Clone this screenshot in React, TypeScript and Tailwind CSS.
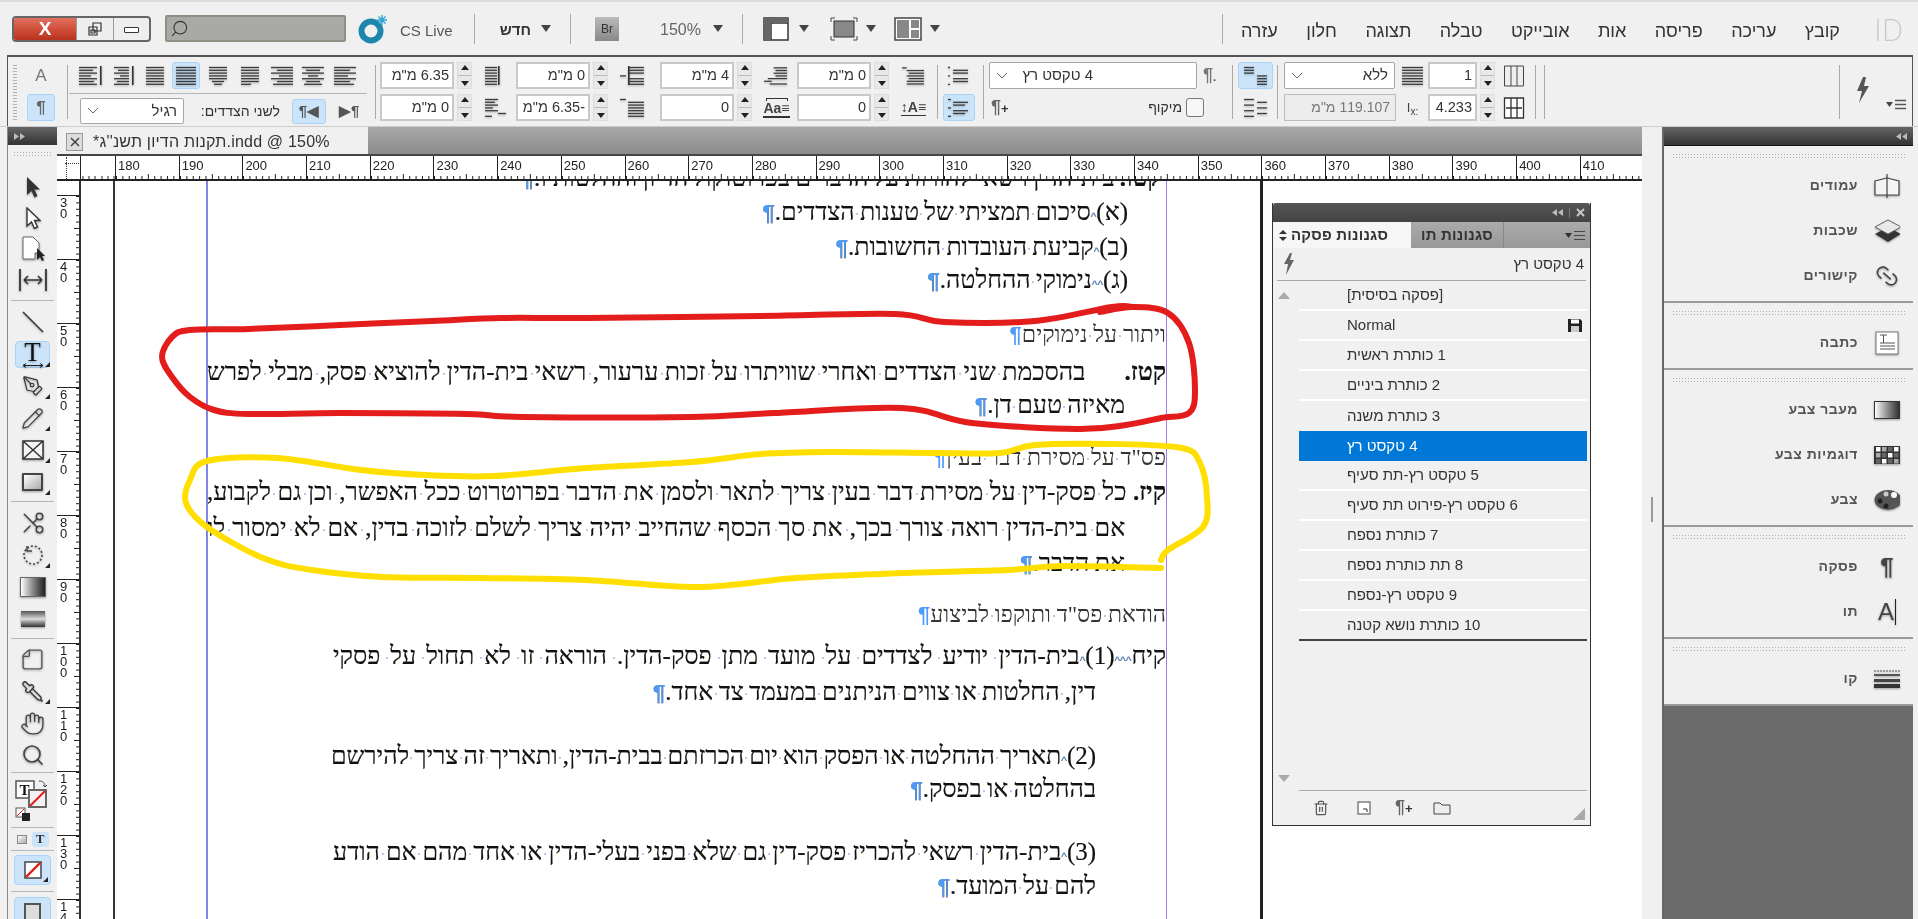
import React from "react";
import { Hand, Pencil, PenTool, Pipette, Scissors, Search, StickyNote, Trash2, Link2 } from "lucide-react";

const Tri = ({ c = "" }: { c?: string }) => (
  <svg width="10" height="7" viewBox="0 0 10 7" className={c}><path d="M0 0H10L5 7Z" fill="#444" /></svg>
);
const Sep = ({ c = "" }: { c?: string }) => <div className={"w-px bg-[#a8a8a8] " + c} />;
const Grip = ({ c = "" }: { c?: string }) => (
  <div className={"h-[5px] bg-[radial-gradient(circle,#b0b0b0_0.7px,transparent_0.8px)] bg-[length:3px_3px] " + c} />
);

const Lines = ({ rows, w = 24, h = 22, bar, c = "" }: { rows: number[][]; w?: number; h?: number; bar?: number; c?: string }) => (
  <svg width={w} height={h} viewBox={`0 0 ${w} ${h}`} className={"drop-shadow-[0_1px_1px_rgba(0,0,0,0.3)] " + c}>
    {rows.map((r, i) => (
      <line key={i} x1={r[0]} x2={r[1]} y1={2.5 + i * 2.8} y2={2.5 + i * 2.8} stroke="#3c3c3c" strokeWidth="1.3" />
    ))}
    {bar !== undefined && <rect x={bar} y="1" width="1.6" height="19" fill="#333" />}
  </svg>
);

const alignRows: { rows: number[][]; bar?: number; on?: boolean; w: number }[] = [
  { w: 24, bar: 21, rows: [[0, 18], [0, 14], [0, 18], [0, 12], [0, 18], [0, 15], [0, 18]] },
  { w: 24, bar: 21, rows: [[3, 18], [7, 18], [3, 18], [9, 18], [3, 18], [6, 18], [3, 18]] },
  { w: 22, rows: [[2, 20], [2, 20], [2, 20], [2, 20], [2, 20], [2, 20], [2, 20]] },
  { w: 22, on: true, rows: [[1, 21], [1, 21], [1, 21], [1, 21], [1, 21], [1, 21], [1, 21]] },
  { w: 22, rows: [[2, 20], [2, 20], [2, 20], [2, 20], [2, 20], [5, 17], [7, 15]] },
  { w: 22, rows: [[2, 20], [2, 20], [2, 20], [2, 20], [2, 20], [2, 20], [2, 12]] },
  { w: 22, rows: [[0, 22], [6, 22], [0, 22], [8, 22], [0, 22], [6, 22], [2, 22]] },
  { w: 22, rows: [[0, 22], [4, 18], [0, 22], [6, 16], [0, 22], [4, 18], [2, 20]] },
  { w: 22, rows: [[0, 22], [0, 16], [0, 22], [0, 14], [0, 22], [0, 16], [0, 20]] },
];

const Stepper = () => (
  <div className="ml-[3px] flex h-[27px] w-[15px] flex-col items-center justify-around border border-[#ddd] bg-[#e8e8e8]">
    <svg width="8" height="5"><path d="M0 5L4 0L8 5Z" fill="#222" /></svg>
    <div className="h-px w-full bg-[#bbb]" />
    <svg width="8" height="5"><path d="M0 0L8 0L4 5Z" fill="#222" /></svg>
  </div>
);
const Field = ({ v, w = 74, ltr }: { v: string; w?: number; ltr?: boolean }) => (
  <div className="flex h-[27px]">
    <div
      dir={ltr ? "ltr" : "rtl"}
      style={{ width: w }}
      className={"h-[27px] whitespace-nowrap border-2 border-[#c8c8c8] bg-white px-[3px] text-[14.5px] leading-[23px] text-[#333] " + (ltr ? "text-right" : "")}
    >
      {v}
    </div>
    <Stepper />
  </div>
);
const Col = ({ c, children }: { c: string; children: React.ReactNode }) => (
  <div className={"flex shrink-0 flex-col gap-[5px] " + c}>{children}</div>
);
const Cell = ({ children, on, c = "" }: { children?: React.ReactNode; on?: boolean; c?: string }) => (
  <div className={"flex h-[27px] items-center justify-center rounded-[3px] " + (on ? "border border-[#a9d3f7] bg-[#cbe4fa] " : "") + c}>
    {children}
  </div>
);
const Chevron = () => (
  <svg width="12" height="8" className="shrink-0"><path d="M1 1L6 6L11 1" fill="none" stroke="#666" /></svg>
);
const Select = ({ v, c }: { v: string; c: string }) => (
  <div className={"flex h-[27px] items-center rounded-[2px] border border-[#a6a6a6] bg-white px-[6px] " + c}>
    <Chevron />
    <div dir="rtl" className="flex-1 whitespace-nowrap text-[15px] text-[#333]">{v}</div>
  </div>
);
const PilcrowPlus = () => (
  <span className="text-[18px] font-bold leading-none text-[#666]">¶<span className="text-[13px] text-[#333]">+</span></span>
);

const ControlPanel = () => (
  <div className="ml-[7px] mr-[5px] flex h-[71px] shrink-0 border-x border-t-2 border-[#555] bg-[#f0f0f0] pt-[5px]">
    <div className="ml-[5px] mt-[2px] h-[58px] w-[4px] shrink-0 bg-[radial-gradient(circle,#b0b0b0_0.7px,transparent_0.8px)] bg-[length:2px_3px]" />
    <Col c="ml-[10px] w-[28px]">
      <Cell><span className="text-[17px] text-[#777]">A</span></Cell>
      <Cell on><span className="text-[17px] font-bold text-[#666]">¶</span></Cell>
    </Col>
    <Sep c="ml-[12px] h-[54px] mt-[3px] shrink-0" />
    <div className="ml-px flex w-[298px] shrink-0 flex-col">
      <div className="flex h-[31px] items-start justify-between px-[8px] pb-[3px]">
        {alignRows.map((a, i) => (
          <div key={i} className={"flex h-[27px] w-[28px] items-center justify-center rounded-[3px] " + (a.on ? "border border-[#a9d3f7] bg-[#cbe4fa]" : "")}>
            <Lines rows={a.rows} bar={a.bar} w={a.w} />
          </div>
        ))}
      </div>
      <div className="flex h-[32px] items-center border-t border-[#b5b5b5] pl-[11px] pt-[3px]">
        <Select v="רגיל" c="w-[104px] !h-[26px]" />
        <span dir="rtl" className="ml-[8px] w-[88px] whitespace-nowrap text-[14px] text-[#333]">לשני הצדדים:</span>
        <div className="ml-[12px] flex h-[25px] w-[34px] items-center justify-center rounded-[3px] border border-[#a9d3f7] bg-[#cbe4fa] text-[15px] font-bold text-[#555]">¶◀</div>
        <div className="ml-[13px] text-[15px] font-bold text-[#555]">▶¶</div>
      </div>
    </div>
    <Sep c="ml-[8px] h-[54px] mt-[3px] shrink-0" />
    <Col c="ml-[4px] w-[92px]">
      <Field v="6.35 מ&quot;מ" />
      <Field v="0 מ&quot;מ" />
    </Col>
    <Col c="ml-[12px] w-[26px]">
      <Cell><Lines w={26} rows={[[1, 13], [1, 13], [1, 13], [1, 13], [1, 13], [1, 13], [1, 13]]} bar={14} /></Cell>
      <Cell><Lines w={26} rows={[[1, 14], [1, 11], [1, 14], [1, 9], [1, 14], [14, 22], [1, 8]]} /></Cell>
    </Col>
    <Col c="ml-[6px] w-[93px]">
      <Field v="0 מ&quot;מ" />
      <Field v="-6.35 מ&quot;מ" />
    </Col>
    <Col c="ml-[11px] w-[26px]">
      <Cell><Lines w={26} rows={[[9, 24], [9, 24], [9, 24], [0, 6], [9, 24], [9, 24], [9, 24]]} bar={8} /></Cell>
      <Cell><Lines w={26} rows={[[0, 6], [8, 24], [8, 24], [8, 24], [8, 24], [8, 24], [8, 24]]} /></Cell>
    </Col>
    <Col c="ml-[14px] w-[92px]">
      <Field v="4 מ&quot;מ" />
      <Field v="0" />
    </Col>
    <Col c="ml-[12px] w-[25px]">
      <Cell><Lines w={26} rows={[[10, 24], [12, 24], [10, 24], [12, 24], [4, 24], [0, 8], [6, 24]]} /></Cell>
      <Cell>
        <div className="flex flex-col items-center leading-none">
          <div className="h-[3px] w-[22px] border-x border-t border-[#333]" />
          <span className="border-b-2 border-[#333] text-[14px] font-bold leading-[15px] text-[#444]">Aa≡</span>
        </div>
      </Cell>
    </Col>
    <Col c="ml-[8px] w-[92px]">
      <Field v="0 מ&quot;מ" />
      <Field v="0" />
    </Col>
    <Col c="ml-[12px] w-[25px]">
      <Cell><Lines w={26} rows={[[1, 6], [6, 24], [8, 24], [6, 24], [8, 24], [6, 24], [6, 24]]} /></Cell>
      <Cell><span className="whitespace-nowrap border-b border-[#333] text-[14px] font-bold leading-[16px] text-[#444]">↕A≡</span></Cell>
    </Col>
    <Sep c="ml-[11px] h-[54px] mt-[3px] shrink-0" />
    <Col c="ml-[5px] w-[32px]">
      <Cell><Lines w={22} rows={[[0, 2], [5, 20], [5, 20], [0, 2], [5, 20], [5, 20], [0, 2]]} /></Cell>
      <Cell on><Lines w={22} rows={[[0, 3], [5, 20], [5, 17], [0, 3], [5, 20], [5, 17], [0, 3]]} /></Cell>
    </Col>
    <Sep c="ml-[8px] h-[54px] mt-[3px] shrink-0" />
    <Col c="ml-[5px] w-[235px]">
      <div className="flex h-[27px] items-center">
        <Select v="4 טקסט רץ" c="w-[208px] !pr-[103px]" />
        <span className="ml-[6px] text-[18px] font-bold text-[#777]">¶<span className="text-[11px] text-[#333]">.</span></span>
      </div>
      <div className="flex h-[27px] items-center">
        <span className="ml-[2px] mt-[1px]"><PilcrowPlus /></span>
        <span dir="rtl" className="ml-auto whitespace-nowrap text-[14px] text-[#333]">מיקוף</span>
        <div className="ml-[4px] mr-[20px] h-[19px] w-[18px] rounded-[3px] border border-[#777] bg-[#f6f6f6]" />
      </div>
    </Col>
    <Sep c="ml-[8px] h-[54px] mt-[3px] shrink-0" />
    <Col c="ml-[5px] w-[35px]">
      <Cell on><Lines w={26} rows={[[1, 11], [1, 11], [1, 11], [14, 24], [14, 24], [14, 24], [14, 24]]} /></Cell>
      <Cell><Lines w={26} rows={[[1, 11], [14, 24], [1, 11], [14, 24], [1, 11], [14, 24], [1, 11]]} /></Cell>
    </Col>
    <Sep c="ml-[4px] h-[54px] mt-[3px] shrink-0" />
    <Col c="ml-[6px] w-[112px]">
      <Select v="ללא" c="w-[111px]" />
      <div dir="rtl" className="h-[27px] w-[112px] border border-[#bbb] bg-[#ececec] px-[5px] text-[14px] leading-[25px] text-[#777]">119.107 מ&quot;מ</div>
    </Col>
    <Col c="ml-[4px] w-[25px]">
      <Cell><Lines w={24} rows={[[1, 22], [1, 22], [1, 22], [1, 22], [1, 22], [1, 22], [1, 22]]} /></Cell>
      <Cell><span className="whitespace-nowrap text-[13px] leading-none text-[#444]">I<sub className="text-[10px]">x:</sub></span></Cell>
    </Col>
    <Col c="ml-[3px] w-[67px]">
      <Field v="1" w={49} ltr />
      <Field v="4.233" w={49} ltr />
    </Col>
    <Col c="ml-[7px] w-[23px]">
      <Cell>
        <svg width="22" height="24"><path d="M1.5 2H20.5V22H1.5ZM8 2V22M14 2V22" fill="#eee" stroke="#444" /></svg>
      </Cell>
      <Cell>
        <svg width="22" height="26"><path d="M1.5 3H20.5V23H1.5ZM8 3V23M14 3V23M3 13H19" fill="#fff" stroke="#333" strokeWidth="1.3" /></svg>
      </Cell>
    </Col>
    <Sep c="ml-[10px] h-[54px] mt-[3px] shrink-0" />
    <Sep c="ml-[8px] h-[54px] mt-[3px] shrink-0" />
    <Sep c="ml-[294px] h-[54px] mt-[3px] shrink-0" />
    <svg width="14" height="26" className="ml-[16px] mt-[15px] shrink-0"><path d="M7 0L1 14H6L3 26L13 9H8L10 0Z" fill="#555" /></svg>
    <div className="ml-[16px] mt-[20px] flex shrink-0 items-center gap-[2px]">
      <svg width="7" height="5"><path d="M0 0H7L3.5 5Z" fill="#444" /></svg>
      <svg width="11" height="11"><path d="M0 1.5H11M0 5.5H11M0 9.5H11" stroke="#555" strokeWidth="1.3" /></svg>
    </div>
  </div>
);

const TitleBar = () => (
  <div className="flex h-[53px] shrink-0 items-center">
    <div className="ml-[12px] flex h-[26px] w-[139px] shrink-0 overflow-hidden rounded-[4px] border-2 border-[#666] bg-[#eee]">
      <div className="flex w-[62px] items-center justify-center bg-linear-to-b from-[#e07060] via-[#d0503a] to-[#b8321e] text-[19px] font-black leading-none text-white">X</div>
      <div className="flex w-[38px] items-center justify-center border-x border-[#999]">
        <svg width="14" height="14"><path d="M5 1H13V9H5ZM1 5H9V13H1ZM3 8H7V11H3Z" fill="none" stroke="#333" strokeWidth="1.2" /></svg>
      </div>
      <div className="flex flex-1 items-center justify-center">
        <div className="mt-[2px] h-[6px] w-[15px] rounded-[1px] border border-[#333] bg-white" />
      </div>
    </div>
    <div className="ml-[14px] flex h-[27px] w-[181px] shrink-0 items-center rounded-[2px] border-2 border-[#8f8f83] bg-[#a9a9a6] pl-[3px]">
      <Search size={19} className="-scale-x-100 text-[#333]" strokeWidth={1.4} />
    </div>
    <svg width="32" height="30" viewBox="0 0 32 30" className="ml-[12px] shrink-0">
      <circle cx="13" cy="17" r="9.5" fill="none" stroke="#1d86ad" strokeWidth="6" />
      <path d="M24 1V11M19 6H29M20.5 2.5L27.5 9.5M27.5 2.5L20.5 9.5" stroke="#2aa6d6" strokeWidth="1.4" />
    </svg>
    <span className="ml-[10px] mt-[5px] w-[52px] shrink-0 whitespace-nowrap text-[15px] text-[#555]">CS Live</span>
    <Sep c="ml-[22px] h-[30px] shrink-0" />
    <span dir="rtl" className="ml-[19px] mt-[4px] w-[37px] shrink-0 text-[15px] font-bold text-[#333]">חדש</span>
    <Tri c="ml-[10px] shrink-0" />
    <Sep c="ml-[19px] h-[30px] shrink-0" />
    <div className="ml-[24px] flex h-[24px] w-[24px] shrink-0 items-center justify-center bg-linear-to-b from-[#bbb] to-[#888] text-[12px] text-[#333]">Br</div>
    <span className="ml-[41px] mt-[3px] w-[40px] shrink-0 text-[16px] text-[#666]">150%</span>
    <Tri c="ml-[13px] shrink-0" />
    <Sep c="ml-[19px] h-[30px] shrink-0" />
    <svg width="26" height="24" className="ml-[20px] shrink-0"><path d="M1 1H25V23H1ZM8 6V23M1 6H25" fill="#fff" stroke="#333" strokeWidth="1.5" /><path d="M1 1H25V6H1ZM1 6H8V23H1Z" fill="#666" /></svg>
    <Tri c="ml-[10px] shrink-0" />
    <svg width="28" height="24" className="ml-[21px] shrink-0"><path d="M1 5V1H5M23 1H27V5M27 19V23H23M5 23H1V19" fill="none" stroke="#444" /><rect x="4" y="4" width="20" height="16" fill="#888" stroke="#333" /></svg>
    <Tri c="ml-[8px] shrink-0" />
    <svg width="28" height="24" className="ml-[18px] shrink-0"><rect x="1" y="1" width="26" height="22" fill="#fff" stroke="#444" strokeWidth="1.5" /><path d="M3 3H15V21H3ZM17 3H25V11H17ZM17 13H25V21H17Z" fill="#888" /></svg>
    <Tri c="ml-[8px] shrink-0" />
    <Sep c="ml-[282px] h-[30px] shrink-0" />
    <div dir="rtl" className="ml-[18px] mt-[6px] flex w-[599px] shrink-0 justify-between text-[18px] text-[#333]">
      {["קובץ", "עריכה", "פריסה", "אות", "אובייקט", "טבלה", "תצוגה", "חלון", "עזרה"].map((m) => (
        <span key={m}>{m}</span>
      ))}
    </div>
    <span className="ml-[34px] mt-[2px] font-['Inter',sans-serif] text-[30px] font-extralight leading-none text-[#c8c8c8]">ID</span>
  </div>
);

const Tool = ({ h = 32, children, on, tri }: { h?: 31 | 32; children: React.ReactNode; on?: boolean; tri?: boolean }) => (
  <div className={(h === 31 ? "h-[31px]" : "h-[32px]") + " relative flex items-center justify-center"}>
    {on && <div className="absolute left-[7px] top-[3px] h-[27px] w-[35px] rounded-[4px] border border-[#a9d3f7] bg-[#cbe4fa]" />}
    <div className="relative flex items-center justify-center drop-shadow-[0_1px_1px_rgba(0,0,0,0.35)]">{children}</div>
    {tri && <svg width="5" height="5" className="absolute bottom-[3px] right-[7px]"><path d="M5 0V5H0Z" fill="#222" /></svg>}
  </div>
);
const ToolSep = ({ c }: { c: string }) => <div className={"mx-[3px] h-px shrink-0 bg-[#b5b5b5] " + c} />;

const Toolbox = () => (
  <div className="ml-[7px] flex w-[50px] shrink-0 flex-col border-l border-[#888] bg-[#f0f0f0]">
    <div className="flex h-[18px] shrink-0 items-center bg-linear-to-b from-[#666] to-[#333] pl-[6px]">
      <svg width="11" height="7"><path d="M0 0L5 3.5L0 7ZM6 0L11 3.5L6 7Z" fill="#bbb" /></svg>
    </div>
    <Grip c="mx-[5px] mt-[6px] shrink-0" />
    <div className="mt-[15px] flex flex-col">
      <Tool h={31}><svg width="16" height="22"><path d="M2 1V19L6.5 15L9.5 21.5L12.5 20L9.5 13.5L15 13.5Z" fill="#333" /></svg></Tool>
      <Tool h={31}><svg width="16" height="22"><path d="M2 1V19L6.5 15L9.5 21.5L12.5 20L9.5 13.5L15 13.5Z" fill="#fff" stroke="#333" strokeWidth="1.4" /></svg></Tool>
      <Tool h={31}><svg width="24" height="26"><path d="M2 1H12L18 7V17H14V23H2Z" fill="#fff" stroke="#666" /><path d="M16 12V24L19 21L21 25L23 24L21 20H24Z" fill="#222" /></svg></Tool>
      <Tool h={31}><svg width="30" height="24"><path d="M2 1V23M28 1V23" stroke="#333" strokeWidth="1.8" /><path d="M6 12H24M6 12L10 8M6 12L10 16M24 12L20 8M24 12L20 16" fill="none" stroke="#333" strokeWidth="1.6" /></svg></Tool>
      <ToolSep c="mb-[5px] mt-[5px]" />
      <Tool><svg width="22" height="22"><path d="M1 1L21 21" stroke="#333" strokeWidth="1.4" /></svg></Tool>
      <Tool on tri>
        <div className="flex flex-col items-center">
          <span className="font-['Liberation_Serif',serif] text-[27px] leading-[22px] text-[#111]">T</span>
          <svg width="22" height="5"><path d="M1 2.5H21M1 2.5L4 0.5M1 2.5L4 4.5M21 2.5L18 0.5M21 2.5L18 4.5" fill="none" stroke="#222" /></svg>
        </div>
      </Tool>
      <Tool tri><PenTool size={22} strokeWidth={1.3} className="text-[#333]" /></Tool>
      <Tool tri><Pencil size={23} strokeWidth={1.3} className="text-[#444]" /></Tool>
      <Tool tri><svg width="22" height="20"><path d="M1 1H21V19H1ZM1 1L21 19M21 1L1 19" fill="#f4f4f4" stroke="#333" strokeWidth="1.5" /></svg></Tool>
      <Tool tri><div className="h-[18px] w-[21px] rounded-[1px] border-2 border-[#444] bg-linear-to-br from-[#fff] to-[#aaa]" /></Tool>
      <ToolSep c="mb-[5px] mt-[3px]" />
      <Tool><Scissors size={26} strokeWidth={1.4} className="-scale-x-100 text-[#444]" /></Tool>
      <Tool tri><svg width="22" height="22"><circle cx="11" cy="11" r="9" fill="none" stroke="#444" strokeWidth="1.6" strokeDasharray="2 2" /><path d="M5 2V7H10" fill="none" stroke="#444" strokeWidth="1.4" /></svg></Tool>
      <Tool><div className="h-[18px] w-[24px] bg-linear-to-r from-[#fff] to-[#222] outline outline-[#666]" /></Tool>
      <Tool><div className="h-[16px] w-[24px] bg-linear-to-b from-[#555] via-[#ddd] to-[#333]" /></Tool>
      <ToolSep c="mb-[4px] mt-[3px]" />
      <Tool><StickyNote size={25} strokeWidth={1.3} className="-scale-x-100 text-[#555]" /></Tool>
      <Tool tri><Pipette size={23} strokeWidth={1.4} className="-scale-x-100 text-[#333]" /></Tool>
      <Tool><Hand size={25} strokeWidth={1.3} className="text-[#444]" /></Tool>
      <Tool><Search size={24} strokeWidth={1.7} className="text-[#444]" /></Tool>
      <ToolSep c="mb-[5px] mt-[1px]" />
      <div className="flex h-[46px] shrink-0 items-center justify-center">
        <svg width="36" height="44" viewBox="0 0 36 44">
          <rect x="1" y="2" width="18" height="17" fill="#fff" stroke="#555" strokeWidth="1.5" />
          <text x="4.5" y="16" fontSize="15" fontWeight="bold" fontFamily="Liberation Serif" fill="#111">T</text>
          <path d="M24 2C28 2 30 4 30 8M30 8L28 6M30 8L32 6" fill="none" stroke="#444" />
          <rect x="14" y="11" width="17" height="17" fill="#f2f2f2" stroke="#666" strokeWidth="2" />
          <path d="M15 27L30 12" stroke="#e01818" strokeWidth="2" />
          <rect x="1" y="29" width="9" height="9" fill="#fff" stroke="#555" />
          <path d="M2 37L9 30" stroke="#e01818" />
          <rect x="7" y="34" width="8" height="8" fill="#222" />
        </svg>
      </div>
      <ToolSep c="mb-[3px] mt-[3px]" />
      <div className="flex h-[16px] shrink-0 items-center justify-center gap-[5px]">
        <div className="h-[9px] w-[10px] border border-[#888] bg-linear-to-br from-[#fff] to-[#aaa]" />
        <div className="flex h-[15px] w-[17px] items-center justify-center rounded-[3px] bg-[#cbe4fa] font-['Liberation_Serif',serif] text-[13px] font-bold text-[#333]">T</div>
      </div>
      <ToolSep c="mb-[4px] mt-[3px]" />
      <div className="relative mx-[6px] flex h-[30px] shrink-0 items-center justify-center rounded-[4px] border border-[#a9d3f7] bg-[#cbe4fa]">
        <svg width="18" height="18"><rect x="1" y="1" width="16" height="16" fill="#fff" stroke="#444" strokeWidth="1.5" /><path d="M2 16L16 2" stroke="#e01818" strokeWidth="2.4" /></svg>
        <svg width="5" height="5" className="absolute bottom-[2px] right-[2px]"><path d="M5 0V5H0Z" fill="#222" /></svg>
      </div>
      <ToolSep c="mb-[5px] mt-[6px]" />
      <div className="mx-[6px] flex h-[28px] shrink-0 items-start justify-center rounded-[4px] border border-[#a9d3f7] bg-[#cbe4fa] pt-[5px]">
        <div className="h-[20px] w-[17px] border-2 border-[#555] bg-[#ddd]" />
      </div>
    </div>
  </div>
);

const Ticks = ({ w }: { w: number }) => (
  <svg width={w} height="6" className="absolute bottom-0 left-0">
    {Array.from({ length: 10 }).map((_, i) => (
      <line key={i} x1={i * 6.37 + 0.5} x2={i * 6.37 + 0.5} y1={i === 5 ? 1 : 3} y2="6" stroke="#222" />
    ))}
  </svg>
);
const hNums = [180, 190, 200, 210, 220, 230, 240, 250, 260, 270, 280, 290, 300, 310, 320, 330, 340, 350, 360, 370, 380, 390, 400, 410];
const HRuler = () => (
  <div className="flex h-[25px] shrink-0 overflow-hidden border-b-2 border-[#222] bg-white">
    <div className="relative h-full w-[24px] shrink-0 border-r border-[#222]">
      <div className="absolute left-[8px] top-[7px] h-px w-[16px] border-t border-dotted border-[#333]" />
      <div className="absolute left-[9px] top-[1px] h-[22px] w-px border-l border-dotted border-[#333]" />
    </div>
    <div className="relative h-full w-[34px] shrink-0"><svg width="34" height="6" className="absolute bottom-0 right-0"><path d="M2 3V6M8 3V6M14 3V6M21 3V6M27 3V6M33 3V6" stroke="#222" /></svg></div>
    {hNums.map((n) => (
      <div key={n} className="relative h-full w-[63.7px] shrink-0 border-l border-[#222] pl-[2px] text-[13px] leading-[19px] text-[#222]">
        {n}
        <Ticks w={63.7} />
      </div>
    ))}
    <div className="relative h-full w-[59px] shrink-0 overflow-hidden border-l border-[#222]"><Ticks w={63.7} /></div>
  </div>
);
const vNums = ["30", "40", "50", "60", "70", "80", "90", "100", "110", "120", "130", "140"];
const VRuler = () => (
  <div className="flex w-[24px] shrink-0 flex-col border-r-2 border-[#333] bg-white">
    <div className="h-[14px] shrink-0" />
    {vNums.map((n) => (
      <div key={n} className="relative h-[64px] shrink-0 border-t border-[#222] pl-[3px] pt-[1px] text-[13px] leading-[11px] text-[#222]">
        {n.split("").map((d, i) => <div key={i}>{d}</div>)}
        <svg width="6" height="64" className="absolute right-0 top-0">
          {Array.from({ length: 10 }).map((_, i) => (
            <line key={i} x1={i === 5 ? 1 : 3} x2="6" y1={i * 6.4 + 0.5} y2={i * 6.4 + 0.5} stroke="#222" />
          ))}
        </svg>
      </div>
    ))}
  </div>
);

const T = ({ s }: { s: string }) => (
  <>
    {s.split(/([ ^¶])/).map((p, i) => {
      if (p === " ")
        return (
          <React.Fragment key={i}>
            <span className="relative inline-block h-0 w-0 align-baseline">
              <span className="absolute bottom-[5px] right-[2px] size-[2px] rounded-full bg-[#8fbdf5]" />
            </span>{" "}
          </React.Fragment>
        );
      if (p === "^") return <span key={i} className="align-[-1px] font-['Liberation_Sans',sans-serif] text-[12px] font-normal text-[#6aa5ea]">^</span>;
      if (p === "¶") return <span key={i} className="font-['Liberation_Sans',sans-serif] text-[22px] font-bold text-[#4c9bfb]">¶</span>;
      return <React.Fragment key={i}>{p}</React.Fragment>;
    })}
  </>
);

const lineBase = "h-[35px] leading-[35px] text-[#111] text-[25px] [word-spacing:-1px] [-webkit-text-stroke:0.2px_#111]";
const headBase = "h-[35px] leading-[35px] text-[#333] text-[23px]";
const just = " text-justify [text-align-last:justify]";
const Page = () => (
  <div className="relative w-[1148px] shrink-0 overflow-hidden border-r-[3px] border-[#222] bg-white">
    <div className="absolute bottom-0 left-[91px] top-0 w-px bg-[#5b8fe0]" />
    <div className="absolute bottom-0 left-[92px] top-0 w-px bg-[#a679e8]" />
    <div className="absolute bottom-0 left-[1051px] top-0 w-px bg-[#a679e8]" />
    <div dir="rtl" className="ml-[92px] w-[959px] font-['Liberation_Serif',serif]">
      <div className={lineBase + " -mb-[1px] -mt-[21px] pr-[5px]"}><b>קטו.</b> <T s="בית-הדין רשאי להורות על הדברים בפרוטוקול הדיון והחלטותיו.¶" /></div>
      <div className={lineBase + " pr-[38px]"}><T s="(א)^סיכום תמציתי של טענות הצדדים.¶" /></div>
      <div className={lineBase + " pr-[38px]"}><T s="(ב)^קביעת העובדות החשובות.¶" /></div>
      <div className={lineBase + " -mt-[2px] pr-[38px]"}><T s="(ג)^^נימוקי ההחלטה.¶" /></div>
      <div className={headBase + " mt-[20px]"}><T s="ויתור על נימוקים¶" /></div>
      <div className={lineBase + just + " mt-[2px]"}><b className="inline-block w-[81px] text-right [text-align-last:right]">קטז.</b><T s="בהסכמת שני הצדדים ואחרי שוויתרו על זכות ערעור, רשאי בית-הדין להוציא פסק, מבלי לפרש" /></div>
      <div className={lineBase + " -mt-[2px] pr-[41px]"}><T s="מאיזה טעם דן.¶" /></div>
      <div className={headBase + " mt-[18px]"}><T s='פס"ד על מסירת דבר בעין¶' /></div>
      <div className={lineBase + just + " -mt-[1px]"}><b>קיז.</b> <T s="כל פסק-דין על מסירת דבר בעין צריך לתאר ולסמן את הדבר בפרוטרוט ככל האפשר, וכן גם לקבוע," /></div>
      <div className={lineBase + just + " mt-[1px] pr-[41px]"}><T s="אם בית-הדין רואה צורך בכך, את סך הכסף שהחייב יהיה צריך לשלם לזוכה בדין, אם לא ימסור לו" /></div>
      <div className={lineBase + " pr-[41px]"}><T s="את הדבר.¶" /></div>
      <div className={headBase + " mt-[17px]"}><T s='הודאת פס"ד ותוקפו לביצוע¶' /></div>
      <div className={lineBase + just + " mt-[6px] pl-[126px]"}>קיח<T s="^^^(1)^בית-הדין יודיע לצדדים על מועד מתן פסק-הדין. הוראה זו לא תחול על פסקי" /></div>
      <div className={lineBase + " mt-[1px] pr-[70px]"}><T s="דין, החלטות או צווים הניתנים במעמד צד אחד.¶" /></div>
      <div className={lineBase + just + " mt-[29px] pl-[124px] pr-[70px] ![word-spacing:-3px]"}><T s="(2)^תאריך ההחלטה או הפסק הוא יום הכרזתם בבית-הדין, ותאריך זה צריך להירשם" /></div>
      <div className={lineBase + " -mt-[2px] pr-[70px]"}><T s="בהחלטה או בפסק.¶" /></div>
      <div className={lineBase + just + " mt-[28px] pl-[126px] pr-[70px]"}><T s="(3)^בית-הדין רשאי להכריז פסק-דין גם שלא בפני בעלי-הדין או אחד מהם אם הודע" /></div>
      <div className={lineBase + " -mt-[1px] pr-[70px]"}><T s="להם על המועד.¶" /></div>
    </div>
  </div>
);

const DocArea = () => (
  <div className="flex w-[1585px] shrink-0 flex-col overflow-hidden bg-white">
    <div className="flex h-[29px] shrink-0 border-b-2 border-[#444] bg-linear-to-b from-[#a8a8a8] to-[#8c8c8c]">
      <div className="flex h-full w-[311px] items-center bg-[#f0f0f0] pl-[9px] pt-[2px]">
        <div className="flex h-[18px] w-[17px] items-center justify-center border border-[#999] bg-[#ddd]">
          <svg width="10" height="10"><path d="M1 1L9 9M9 1L1 9" stroke="#444" strokeWidth="1.5" /></svg>
        </div>
        <span dir="ltr" className="ml-[10px] whitespace-nowrap text-[16px] tracking-[0.2px] text-[#333]">
          *תקנות הדיון תשנ&apos;&apos;ג.indd @ 150%
        </span>
      </div>
    </div>
    <HRuler />
    <div className="flex min-h-0 flex-1">
      <VRuler />
      <div className="w-[34px] shrink-0 border-r-2 border-[#333] bg-white" />
      <Page />
    </div>
  </div>
);

type DockRow = { t: string; icon: React.ReactNode };
const Group = ({ rows }: { rows: DockRow[] }) => (
  <div className="border-b-2 border-[#9a9a9a] pb-[3px] pt-[7px]">
    <Grip c="mx-[8px] mb-[5px]" />
    {rows.map((r) => (
      <div key={r.t} className="flex h-[45px] items-center justify-end">
        <span dir="rtl" className="text-[14px] font-bold tracking-[0.5px] text-[#555]">{r.t}</span>
        <div className="ml-[16px] mr-[13px] flex w-[26px] justify-center drop-shadow-[0_1px_1px_rgba(0,0,0,0.35)]">{r.icon}</div>
      </div>
    ))}
  </div>
);
const Dock = () => (
  <div className="flex w-[251px] shrink-0 flex-col border-l-2 border-[#666] bg-[#6b6b6b]">
    <div className="flex h-[18px] shrink-0 items-center justify-end bg-linear-to-b from-[#666] to-[#333] pr-[6px]">
      <svg width="11" height="7"><path d="M5 0L0 3.5L5 7ZM11 0L6 3.5L11 7Z" fill="#bbb" /></svg>
    </div>
    <div className="border-t border-[#111] bg-[#f0f0f0]">
      <Group rows={[
        { t: "עמודים", icon: <svg width="26" height="24"><path d="M1 7L13 4L25 7V21H1ZM13 0V24" fill="#f4f4f4" stroke="#444" strokeWidth="1.2" /></svg> },
        { t: "שכבות", icon: <svg width="28" height="24"><path d="M14 8L27 15L14 23L1 15Z" fill="#333" /><path d="M14 1L27 8L14 15L1 8Z" fill="#e8e8e8" stroke="#666" /></svg> },
        { t: "קישורים", icon: <Link2 size={28} strokeWidth={1.5} className="rotate-[40deg] text-[#444]" /> },
      ]} />
      <Group rows={[{ t: "כתבה", icon: <svg width="24" height="24"><rect x="1" y="1" width="22" height="22" fill="#fff" stroke="#777" /><path d="M5 4H12M8.500 4V12M5 12H20M5 15H20M5 18H20" stroke="#555" /></svg> }]} />
      <Group rows={[
        { t: "מעבר צבע", icon: <div className="h-[18px] w-[26px] border border-[#333] bg-linear-to-r from-[#fff] to-[#333]" /> },
        { t: "דוגמיות צבע", icon: <svg width="26" height="18"><rect width="26" height="18" fill="#333" />{[0, 1, 2].map((r) => [0, 1, 2, 3].map((c) => <rect key={r + "-" + c} x={2 + c * 6} y={1 + r * 6} width="4.500" height="4.500" fill={(r * 4 + c) % 3 === 0 ? "#fff" : (r + c) % 2 ? "#aaa" : "#666"} />))}</svg> },
        { t: "צבע", icon: <svg width="28" height="22"><ellipse cx="14" cy="11" rx="13.500" ry="10" fill="#555" /><circle cx="20" cy="6" r="3" fill="#fff" /><circle cx="12" cy="5" r="2.500" fill="#ccc" /><circle cx="6" cy="12" r="2.500" fill="#222" /><circle cx="12" cy="17" r="2.500" fill="#222" /></svg> },
      ]} />
      <Group rows={[
        { t: "פסקה", icon: <span className="text-[24px] font-bold leading-none text-[#444]">¶</span> },
        { t: "תו", icon: <span className="border-r border-[#222] pr-px text-[24px] leading-[26px] text-[#444]">A</span> },
      ]} />
      <Group rows={[{ t: "קו", icon: <svg width="26" height="18"><path d="M0 1H26" stroke="#555" strokeDasharray="2 1" /><rect y="4" width="26" height="2" fill="#555" /><rect y="9" width="26" height="3" fill="#444" /><rect y="14" width="26" height="4" fill="#333" /></svg> }]} />
    </div>
  </div>
);

const styles = ["[פסקה בסיסית]", "Normal", "1 כותרת ראשית", "2 כותרת ביניים", "3 כותרת משנה", "4 טקסט רץ", "5 טקסט רץ-תת סעיף", "6 טקסט רץ-פירוט תת סעיף", "7 כותרת נספח", "8 תת כותרת נספח", "9 טקסט רץ-נספח", "10 כותרת נושא קטנה"];
const FloatPanel = () => (
  <div className="absolute left-[1272px] top-[203px] flex h-[623px] w-[319px] flex-col border-x border-b border-[#333] bg-[#f0f0f0]">
    <div className="flex h-[19px] shrink-0 items-center justify-end gap-[6px] rounded-t-[3px] bg-linear-to-b from-[#555] to-[#444] pr-[5px]">
      <svg width="11" height="7"><path d="M5 0L0 3.5L5 7ZM11 0L6 3.5L11 7Z" fill="#bbb" /></svg>
      <div className="h-[10px] w-px bg-[#777]" />
      <svg width="9" height="9"><path d="M1 1L8 8M8 1L1 8" stroke="#ccc" strokeWidth="1.8" /></svg>
    </div>
    <div className="flex h-[26px] shrink-0 bg-linear-to-b from-[#aaa] to-[#999]">
      <div className="flex w-[138px] items-center bg-[#f6f6f6] pl-[6px]">
        <svg width="8" height="11" className="shrink-0"><path d="M4 0L8 4H0ZM4 11L0 7H8Z" fill="#333" /></svg>
        <span dir="rtl" className="ml-[4px] whitespace-nowrap text-[15px] font-bold tracking-[0.2px] text-[#333]">סגנונות פסקה</span>
      </div>
      <div className="flex w-[93px] items-center justify-center border-r border-[#888] text-[15px] font-bold tracking-[0.2px] text-[#333]" dir="rtl">סגנונות תו</div>
      <div className="flex flex-1 items-center justify-end gap-[2px] pr-[5px]">
        <svg width="7" height="5"><path d="M0 0H7L3.500 5Z" fill="#333" /></svg>
        <svg width="11" height="11"><path d="M0 1.500H11M0 5.500H11M0 9.500H11" stroke="#444" strokeWidth="1.200" /></svg>
      </div>
    </div>
    <div className="mx-[4px] flex h-[33px] shrink-0 items-center justify-between border-b border-[#aaa] pl-[6px] pr-[2px]">
      <svg width="12" height="22"><path d="M7 0L1 11H5L3 22L11 7H7L9 0Z" fill="#666" /></svg>
      <span dir="rtl" className="text-[15px] text-[#333]">4 טקסט רץ</span>
    </div>
    <div className="flex min-h-0 flex-1">
      <div className="flex w-[26px] shrink-0 flex-col items-center justify-between pb-[9px] pr-[5px] pt-[11px]">
        <svg width="12" height="7"><path d="M6 0L12 7H0Z" fill="#aaa" /></svg>
        <svg width="12" height="7"><path d="M0 0H12L6 7Z" fill="#aaa" /></svg>
      </div>
      <div className="mr-[3px] flex-1 border-b border-[#aaa]">
        {styles.map((s, i) => (
          <div
            key={s}
            className={
              "flex h-[30px] items-center justify-between pl-[48px] pr-[4px] text-[15px] " +
              (i === 5 ? "bg-[#0078d7] text-white" : "text-[#333] ") +
              (i === 11 ? " border-b-2 border-[#444]" : i === 4 || i === 5 ? "" : " border-b-2 border-white")
            }
          >
            <span dir="rtl">{s}</span>
            {i === 1 && (
              <svg width="16" height="15"><path d="M1 1H13L15 3V14H1Z" fill="#222" /><rect x="4" y="1.500" width="8" height="4" fill="#fff" /><rect x="4" y="8" width="8" height="6" fill="#ccc" /></svg>
            )}
          </div>
        ))}
      </div>
    </div>
    <div className="relative flex h-[34px] shrink-0 items-center pl-[40px] text-[#555]">
      <Trash2 size={16} strokeWidth={1.8} />
      <svg width="14" height="14" className="ml-[28px]"><rect x="1" y="1" width="12" height="12" fill="#fff" stroke="#444" /><path d="M6 8H10V11" fill="none" stroke="#333" /></svg>
      <span className="ml-[24px]"><PilcrowPlus /></span>
      <svg width="18" height="14" className="ml-[20px]"><path d="M1 2H7L9 4H17V13H1Z" fill="#eee" stroke="#444" /></svg>
      <svg width="14" height="14" className="absolute bottom-[4px] right-[4px]"><path d="M13 1V13H1Z" fill="#aaa" /></svg>
    </div>
  </div>
);

const smooth = (p: number[][]) => {
  let d = `M${p[0][0]} ${p[0][1]}`;
  for (let i = 0; i < p.length - 1; i++) {
    const a = p[Math.max(i - 1, 0)], b = p[i], c = p[i + 1], e = p[Math.min(i + 2, p.length - 1)];
    d += ` C${b[0] + (c[0] - a[0]) / 6} ${b[1] + (c[1] - a[1]) / 6} ${c[0] - (e[0] - b[0]) / 6} ${c[1] - (e[1] - b[1]) / 6} ${c[0]} ${c[1]}`;
  }
  return d;
};
const red = [[1133, 307], [1112, 307], [1035, 321], [944, 322], [895, 314], [761, 316], [586, 318], [502, 318], [432, 321], [340, 325], [249, 329], [190, 330], [172, 337], [162, 357], [172, 377], [190, 397], [214, 410], [249, 414], [340, 413], [467, 414], [523, 417], [691, 417], [775, 413], [902, 408], [972, 423], [1077, 429], [1126, 425], [1161, 418], [1189, 413], [1195, 390], [1189, 343], [1168, 313], [1133, 307], [1100, 312]];
const yellow = [[1161, 560], [1168, 550], [1203, 527], [1207, 497], [1200, 463], [1182, 448], [1112, 444], [1035, 445], [1000, 453], [937, 453], [831, 452], [761, 454], [691, 462], [586, 468], [495, 476], [425, 475], [361, 470], [277, 458], [207, 461], [190, 480], [186, 503], [207, 527], [263, 558], [312, 570], [383, 577], [481, 578], [586, 580], [698, 587], [796, 578], [902, 573], [1007, 570], [1063, 566], [1161, 568]];

export default function App() {
  return (
    <div className="relative flex h-[919px] w-[1918px] flex-col overflow-hidden bg-[#f0f0f0] font-['Liberation_Sans',sans-serif] blur-[0.35px]">
      <div className="h-[2px] shrink-0 bg-[#dcdcdc]" />
      <TitleBar />
      <ControlPanel />
      <div className="h-px shrink-0 bg-[#ccc]" />
      <div className="flex min-h-0 flex-1">
        <Toolbox />
        <DocArea />
        <div className="flex w-[20px] shrink-0 items-center justify-center bg-[#f0f0f0]">
          <div className="mt-[-28px] h-[25px] w-[2px] bg-[#999]" />
        </div>
        <Dock />
      </div>
      <FloatPanel />
      <svg width="1918" height="919" className="pointer-events-none absolute left-0 top-0">
        <path d={smooth(red)} fill="none" stroke="#e31c1c" strokeWidth="6" strokeLinecap="round" />
        <path d={smooth(yellow)} fill="none" stroke="#ffdf00" strokeWidth="6" strokeLinecap="round" />
      </svg>
    </div>
  );
}
